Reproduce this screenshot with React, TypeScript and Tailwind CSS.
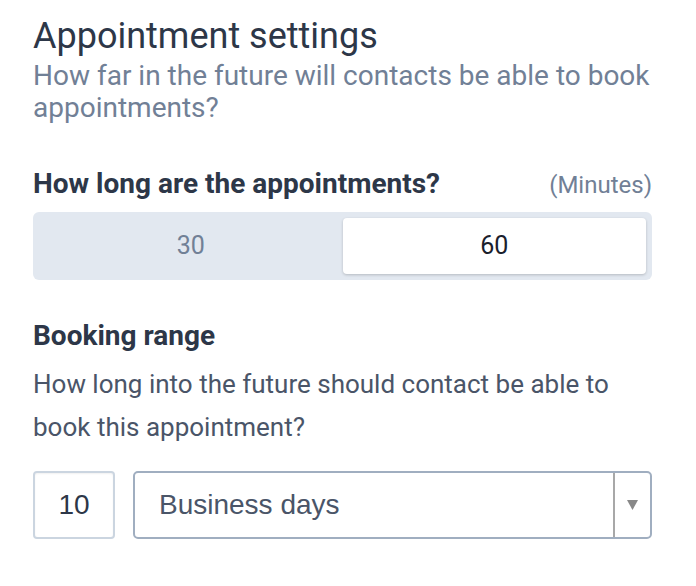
export default function App() {
  return (
    <div className="w-[696px] h-[586px] bg-white pl-[33px] pr-[44px] pt-[16px] font-[Roboto,sans-serif]">
      <h1 className="text-[36px] leading-[40px] text-[#2d3748]">Appointment settings</h1>
      <p className="mt-[4px] text-[28px] leading-[32px] text-[#718096]">
        How far in the future will contacts be able to book appointments?
      </p>

      <div className="mt-[44px] flex items-baseline justify-between">
        <h2 className="text-[28px] leading-[32px] font-bold text-[#2d3748]">
          How long are the appointments?
        </h2>
        <span className="text-[24px] leading-[28px] text-[#718096]">(Minutes)</span>
      </div>

      <div className="mt-[12px] flex h-[68px] rounded-[6px] bg-[#e2e8f0] p-[6px]">
        <button className="flex-1 text-[25px] text-[#718096]">30</button>
        <button className="flex-1 rounded-[4px] bg-white text-[25px] text-[#1a202c] shadow-[0_1px_3px_rgba(0,0,0,0.2)]">
          60
        </button>
      </div>

      <h2 className="mt-[40px] text-[28px] leading-[32px] font-bold text-[#2d3748]">Booking range</h2>
      <p className="mt-[11px] text-[26px] leading-[43px] text-[#4a5568]">
        How long into the future should contact be able to book this appointment?
      </p>

      <div className="mt-[22px] flex gap-[18px]">
        <div className="flex h-[68px] w-[82px] items-center justify-center rounded-[4px] border-2 border-[#cbd5e0] shadow-[inset_0_1px_2px_rgba(0,0,0,0.06)] font-['Liberation_Sans',sans-serif] text-[28px] text-[#2d3748]">
          10
        </div>
        <div className="flex h-[68px] flex-1 items-center rounded-[5px] border-2 border-[#a0aec0]">
          <span className="flex-1 pl-[24px] font-['Liberation_Sans',sans-serif] text-[28px] text-[#4a5568]">
            Business days
          </span>
          <span className="flex h-full w-[37px] items-center justify-center border-l-2 border-[#a8a8a8]">
            <svg width="11" height="10" viewBox="0 0 11 10">
              <path d="M0 0h11L5.5 10z" fill="#888" />
            </svg>
          </span>
        </div>
      </div>
    </div>
  );
}
